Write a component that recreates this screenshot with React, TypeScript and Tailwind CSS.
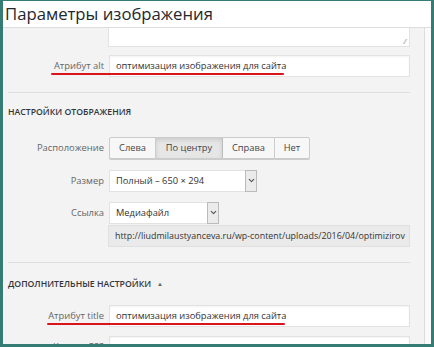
import { ChevronDown } from "lucide-react";

const font = { fontFamily: '"Open Sans", "Noto Sans", sans-serif' };

function Label({ children }: { children: React.ReactNode }) {
  return (
    <div className="w-[106px] shrink-0 text-right pr-[5px] text-[9.4px] text-[#666]">
      {children}
    </div>
  );
}

function TextInput({ value }: { value: string }) {
  return (
    <div className="w-[301px] h-[22px] bg-white border border-[#e2e2e2] shadow-[inset_0_1px_2px_rgba(0,0,0,0.05)] flex items-center px-[6px] text-[9.3px] text-[#333]">
      {value}
    </div>
  );
}

function Select({ value, width }: { value: string; width: string }) {
  return (
    <div className={`${width} h-[22px] bg-white border border-[#e2e2e2] flex items-center text-[9.3px] text-[#333]`}>
      <span className="flex-1 px-[6px] whitespace-nowrap">{value}</span>
      <span className="w-[12px] h-[22px] -my-px -mr-px bg-[#ebebeb] border border-[#bbb] flex items-center justify-center">
        <ChevronDown size={9} strokeWidth={3} className="text-[#555]" />
      </span>
    </div>
  );
}

export default function App() {
  return (
    <div style={font} className="w-[434px] h-[347px] overflow-hidden border-l-[3px] border-r-[3px] border-t border-b-[3px] border-[#357c74] flex flex-col bg-white">
      <div className="h-[27px] shrink-0 bg-white border-b border-[#ddd] flex items-center pl-[2px]">
        <h1 className="text-[16.7px] text-[#23282d] leading-none">Параметры изображения</h1>
      </div>
      <div className="flex-1 flex min-h-0">
        <div className="flex-1 bg-[#f3f3f3] border-r border-[#dcdcdc] pl-[5px] pr-[14px] overflow-hidden">
          {/* textarea bottom (scrolled) */}
          <div className="ml-[100px] w-[302px] h-[19px] bg-white border border-t-0 border-[#e2e2e2] relative">
            <span className="absolute right-[3px] bottom-[1px] text-[7px] leading-none text-[#999]">⁄⁄</span>
          </div>

          <div className="relative flex items-center -ml-[5px] mt-[8px]">
            <Label>Атрибут alt</Label>
            <TextInput value="оптимизация изображения для сайта" />
            <div className="absolute left-[48px] top-[18px] w-[233px] h-[2px] rounded-full bg-[#d9141a]" />
          </div>

          <div className="mt-[15px] border-t border-[#dedede]" />

          <div className="mt-[15px] text-[8.7px] font-semibold text-[#32373c] leading-none">
            НАСТРОЙКИ ОТОБРАЖЕНИЯ
          </div>

          <div className="flex items-center -ml-[5px] mt-[20px]">
            <Label>Расположение</Label>
            <div className="flex h-[22px] text-[9.3px] text-[#444] border border-[#ccc] rounded-[2px] bg-[#f7f7f7] shadow-[0_1px_0_#ccc]">
              <span className="w-[46px] flex items-center justify-center border-r border-[#ccc]">Слева</span>
              <span className="w-[67px] flex items-center justify-center border-r border-[#bbb] bg-[#e6e6e6] shadow-[inset_0_2px_4px_rgba(0,0,0,0.12)]">По центру</span>
              <span className="w-[52px] flex items-center justify-center border-r border-[#ccc]">Справа</span>
              <span className="w-[34px] flex items-center justify-center">Нет</span>
            </div>
          </div>

          <div className="flex items-center -ml-[5px] mt-[11px]">
            <Label>Размер</Label>
            <Select value="Полный – 650 × 294" width="w-[148px]" />
          </div>

          <div className="flex items-center -ml-[5px] mt-[10px]">
            <Label>Ссылка</Label>
            <Select value="Медиафайл" width="w-[110px]" />
          </div>

          <div className="ml-[100px] mt-[1px] w-[302px] h-[22px] bg-[#eaeaea] border border-[#e0e0e0] flex items-center px-[6px] text-[8.9px] text-[#333] whitespace-nowrap overflow-hidden">
            http://liudmilaustyanceva.ru/wp-content/uploads/2016/04/optimizirov
          </div>

          <div className="mt-[15px] border-t border-[#dedede]" />

          <div className="mt-[17px] text-[8.7px] font-semibold text-[#32373c] leading-none flex items-center gap-[6px]">
            ДОПОЛНИТЕЛЬНЫЕ НАСТРОЙКИ
            <span className="text-[6px] text-[#666]">▲</span>
          </div>

          <div className="relative flex items-center -ml-[5px] mt-[17px]">
            <Label>Атрибут title</Label>
            <TextInput value="оптимизация изображения для сайта" />
            <div className="absolute left-[44px] top-[18px] w-[238px] h-[2px] rounded-full bg-[#d9141a]" />
          </div>

          <div className="flex items-start -ml-[5px] mt-[9px]">
            <Label>
              <span className="relative top-[4px]">Классы CSS</span>
            </Label>
            <TextInput value="" />
          </div>
        </div>
        <div className="w-[6px] bg-[#fafafa]" />
      </div>
    </div>
  );
}
